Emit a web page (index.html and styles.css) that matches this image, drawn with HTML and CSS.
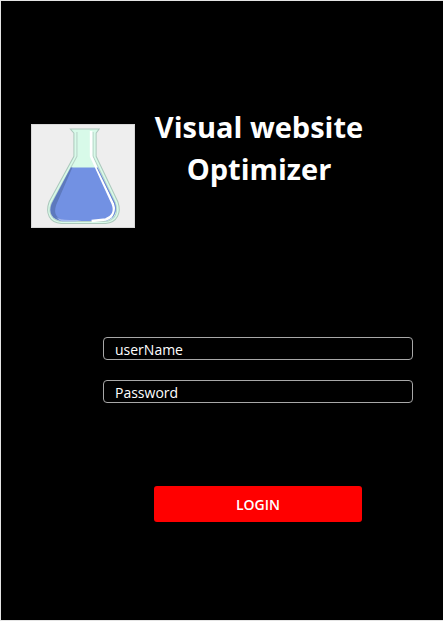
FILE: index.html
```html
<!DOCTYPE html>
<html lang="en">
<head>
<meta charset="utf-8">
<meta name="viewport" content="width=device-width, initial-scale=1">
<title>Visual website Optimizer</title>
<link rel="stylesheet" href="styles.css">
</head>
<body>
<main class="screen">
  <header class="brand">
    <svg class="logo" viewBox="0 0 103 103" role="img" aria-label="Flask">
      <rect width="103" height="103" fill="#eeeeee"/>
      <path d="M39 5H67.500L64.500 9V32L86 77C90 88 85 98 74 98.500H30C18 98 14 88 18 77L42.500 32V9Z" fill="#d8fae9" stroke="#adc8bd"/>
      <path d="M45.500 8V32L20 79C16 89 22 96 31 96.500H73C83 96 87 88 83.500 78L61.500 32V8" fill="none" stroke="#b7d2c7"/>
      <path d="M39.500 43H66L83 78C86 87 82 95 73 96H31C21 95 17 88 20.500 79Z" fill="#7291e3"/>
      <path d="M39.500 43H41L25 80C22 89 25 93 33 96H31C21 95 17 88 20.500 79Z" fill="#5d79bd"/>
      <path d="M25 92Q28 95 38 95H50L44 96.500H31Q27 95 25 92Z" fill="#a5b9ef"/>
      <path d="M59.500 7V32L81 79C84 87 81 92 74 94.500L60 96" fill="none" stroke="#ffffff" stroke-width="2.500"/>
      <path d="M65 43H66L83 78C85 84 84 90 80 93C83 88 84 84 82.500 79Z" fill="#6684d3"/>
      <rect x=".5" y=".5" width="102" height="102" fill="none" stroke="#d8d8d8"/>
    </svg>
    <h1 class="title">Visual website Optimizer</h1>
  </header>
  <form class="login">
    <input class="field" type="text" placeholder="userName" aria-label="userName">
    <input class="field" type="password" placeholder="Password" aria-label="Password">
    <button class="submit" type="button">LOGIN</button>
  </form>
</main>
</body>
</html>
```
FILE: styles.css
```css
* {
  box-sizing: border-box;
}

body {
  margin: 0;
  background: #000;
  color: #fff;
  font-family: "Segoe UI", "Open Sans", "Noto Sans", sans-serif;
}

.screen {
  min-height: 100vh;
  padding: 105px 30px 0;
  border: 1px solid #e4e4e4;
  border-right: 0;
}

.brand {
  display: flex;
  align-items: flex-start;
}

.logo {
  flex: none;
  width: 104px;
  height: 104px;
  margin-top: 18px;
}

.title {
  flex: 0 1 248px;
  margin: 0;
  font-size: 29px;
  line-height: 42px;
  font-weight: 700;
  text-align: center;
}

.login {
  display: flex;
  flex-direction: column;
  gap: 20px;
  margin-top: 109px;
  padding-left: 72px;
}

.field {
  width: 100%;
  height: 23px;
  padding: 2px 11px 0;
  border: 1px solid #a8a8a8;
  border-radius: 4px;
  background: transparent;
  color: #fff;
  font: 14px/20px "Segoe UI", "Open Sans", "Noto Sans", sans-serif;
}

.field::placeholder {
  color: #fff;
  opacity: 1;
}

.submit {
  align-self: center;
  width: 67%;
  height: 36px;
  margin-top: 63px;
  padding: 2px 0 0;
  border: 0;
  border-radius: 3px;
  background: #f00;
  color: #fff;
  font: 600 14px/20px "Segoe UI", "Open Sans", "Noto Sans", sans-serif;
}
```
